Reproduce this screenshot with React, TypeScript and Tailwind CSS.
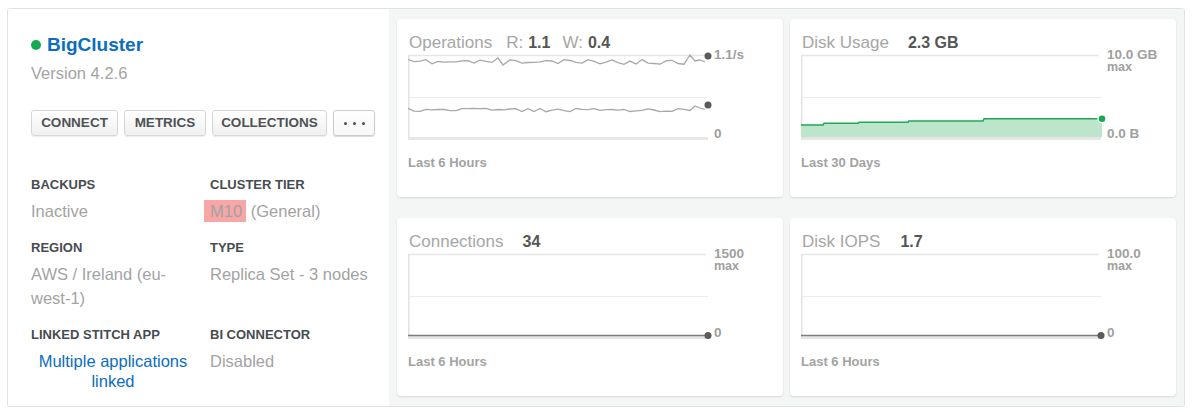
import React from 'react';

// deterministic wobble for the operations chart
function wobble(seed: number, n: number) {
  let s = seed;
  const out: number[] = [];
  for (let i = 0; i < n; i++) {
    s = (s * 16807) % 2147483647;
    out.push(s / 2147483647 - 0.5);
  }
  return out;
}

const toPath = (pts: [number, number][]) =>
  'M' + pts.map(([x, y]) => `${x.toFixed(1)},${y.toFixed(1)}`).join('L');

const N = 50;
const n1 = wobble(11, N);
const n2 = wobble(29, N);

const readPts: [number, number][] = n1.map((v, i) => [i * 6, 9 + v * 5]);
readPts[15] = [90, 5];
readPts[16] = [95, 12];
readPts[47] = [282, 2];
readPts[48] = [287, 8];
readPts[49] = [292, 7];
readPts.push([297, 9]);

const writePts: [number, number][] = n2.map((v, i) => [i * 6, 57 + v * 3.5]);
writePts[48] = [287, 53];
writePts[49] = [292, 55];
writePts.push([297, 56.5]);

const diskPts: [number, number][] = [
  [0, 72],
  [22, 72],
  [23, 70.3],
  [57, 70.3],
  [58, 69.3],
  [107, 69.3],
  [108, 68],
  [182, 68],
  [183, 65.7],
  [301, 65.7],
];

function Grid() {
  return (
    <>
      <line x1="0" y1="2.5" x2="298" y2="2.5" stroke="#e6e6e6" strokeWidth="1.5" />
      <line x1="0" y1="44.5" x2="300" y2="44.5" stroke="#ececec" strokeWidth="1" />
      <line x1="0.75" y1="2" x2="0.75" y2="85" stroke="#e3e3e3" strokeWidth="1.5" />
      <rect x="0" y="84" width="300" height="3" fill="#e6e6e6" />
    </>
  );
}

function Chart({ kind }: { kind: 'ops' | 'disk' | 'flat' }) {
  return (
    <svg width="304" height="88" viewBox="0 0 304 88" className="shrink-0 overflow-visible">
      <Grid />
      {kind === 'ops' && (
        <>
          <path d={toPath(readPts)} fill="none" stroke="#a8a8a8" strokeWidth="1.3" />
          <path d={toPath(writePts)} fill="none" stroke="#a8a8a8" strokeWidth="1.3" />
          <circle cx="300" cy="3" r="3.5" fill="#5b5b5b" />
          <circle cx="300" cy="52" r="3.5" fill="#5b5b5b" />
        </>
      )}
      {kind === 'disk' && (
        <>
          <path d={toPath(diskPts) + 'L301,84L0,84Z'} fill="#bce5cb" />
          <path d={toPath(diskPts)} fill="none" stroke="#1ea854" strokeWidth="1.5" />
          <circle cx="301" cy="65.7" r="4" fill="#13aa52" stroke="#fff" strokeWidth="1.5" />
        </>
      )}
      {kind === 'flat' && (
        <>
          <line x1="0" y1="83.5" x2="300" y2="83.5" stroke="#7d7d7d" strokeWidth="1.5" />
          <circle cx="300" cy="83.5" r="3.5" fill="#5b5b5b" />
        </>
      )}
    </svg>
  );
}

type CardProps = {
  title: React.ReactNode;
  kind: 'ops' | 'disk' | 'flat';
  top: string;
  showMax?: boolean;
  bottom: string;
  range: string;
};

function ChartCard({ title, kind, top, showMax, bottom, range }: CardProps) {
  return (
    <div className="bg-white rounded-[4px] shadow-[0_1px_2px_rgba(0,0,0,0.12)] h-[178px] pl-[11px] pt-[14px] flex flex-col">
      <div className="pl-[1px] flex items-baseline leading-[20px] text-[17px] text-[#a6a6a6] whitespace-nowrap">
        {title}
      </div>
      <div className="flex">
        <Chart kind={kind} />
        <div className="ml-[2px] h-[88px] flex flex-col justify-between -mt-[5px] text-[13.5px] font-bold leading-[13px] text-[#a0a0a0]">
          <div>
            <div>{top}</div>
            {showMax && <div className="text-[12.5px]">max</div>}
          </div>
          <div className="-mb-[4px]">{bottom}</div>
        </div>
      </div>
      <div className="mt-[14px] text-[13px] font-bold leading-[16px] text-[#a3a3a3]">{range}</div>
    </div>
  );
}

const Val = ({ children, ml }: { children: React.ReactNode; ml: string }) => (
  <span className={`${ml} font-bold text-[16px] text-[#565656]`}>{children}</span>
);

function Info({ label, children }: { label: string; children: React.ReactNode }) {
  return (
    <div>
      <div className="text-[13px] font-bold leading-[16px] text-[#464c4f] uppercase">{label}</div>
      {children}
    </div>
  );
}

function LeftPanel() {
  const btn =
    'h-[26px] border border-[#d6d8d8] rounded-[3px] bg-gradient-to-b from-white to-[#f0f0f0] text-[13.5px] font-bold text-[#4f5253] shadow-[0_1px_1px_rgba(0,0,0,0.08)] flex items-center justify-center';
  return (
    <div className="w-[381px] shrink-0 bg-white pl-[23px] pt-[24px]">
      <div className="flex items-center gap-[6px]">
        <span className="w-[10px] h-[10px] rounded-full bg-[#13aa52]" />
        <span className="text-[19px] font-bold leading-[24px] text-[#0b6dbf]">BigCluster</span>
      </div>
      <div className="mt-[4px] text-[16.5px] leading-[24px] text-[#a3a3a3]">Version 4.2.6</div>

      <div className="mt-[25px] flex gap-[6px]">
        <button className={`${btn} w-[87px]`}>CONNECT</button>
        <button className={`${btn} w-[82px]`}>METRICS</button>
        <button className={`${btn} w-[115px]`}>COLLECTIONS</button>
        <button className="h-[26px] w-[42px] border border-[#c8cccc] rounded-[3px] bg-gradient-to-b from-white to-[#f7f7f7] shadow-[0_1px_1px_rgba(0,0,0,0.15)] flex items-center justify-center gap-[6px]">
          <span className="w-[3px] h-[3px] rounded-full bg-[#4f5253]" />
          <span className="w-[3px] h-[3px] rounded-full bg-[#4f5253]" />
          <span className="w-[3px] h-[3px] rounded-full bg-[#4f5253]" />
        </button>
      </div>

      <div className="mt-[41px] grid grid-cols-[164px_1fr] gap-x-[15px] gap-y-[17px] text-[16.5px] leading-[24px] text-[#a3a3a3]">
        <Info label="Backups">
          <div className="mt-[6px]">Inactive</div>
        </Info>
        <Info label="Cluster Tier">
          <div className="mt-[6px]">
            <span className="bg-[#f8a6a6] -ml-[6px] pl-[6px] pr-[4px] py-[2px]">M10</span> (General)
          </div>
        </Info>
        <Info label="Region">
          <div className="mt-[6px]">AWS / Ireland (eu-west-1)</div>
        </Info>
        <Info label="Type">
          <div className="mt-[6px]">Replica Set - 3 nodes</div>
        </Info>
        <Info label="Linked Stitch App">
          <div className="mt-[8px] leading-[20px] text-center text-[#0b6dbf]">Multiple applications linked</div>
        </Info>
        <Info label="BI Connector">
          <div className="mt-[6px]">Disabled</div>
        </Info>
      </div>
    </div>
  );
}

export default function App() {
  return (
    <div className="bg-white min-h-screen pl-[7px] pt-[8px] font-['Liberation_Sans',Arial,sans-serif]">
      <div className="flex w-[1178px] h-[399px] border border-[#dfe2e2] rounded-[3px] overflow-hidden">
        <LeftPanel />
        <div className="flex-1 bg-[#f4f5f5] grid grid-cols-2 grid-rows-2 gap-x-[7px] gap-y-[21px] pt-[10px] px-[8px] pb-[10px]">
          <ChartCard
            kind="ops"
            title={
              <>
                <span>Operations</span>
                <span className="ml-[14px]">R:</span>
                <Val ml="ml-[5px]">1.1</Val>
                <span className="ml-[12px]">W:</span>
                <Val ml="ml-[5px]">0.4</Val>
              </>
            }
            top="1.1/s"
            bottom="0"
            range="Last 6 Hours"
          />
          <ChartCard
            kind="disk"
            title={
              <>
                <span>Disk Usage</span>
                <Val ml="ml-[19px]">2.3 GB</Val>
              </>
            }
            top="10.0 GB"
            showMax
            bottom="0.0 B"
            range="Last 30 Days"
          />
          <ChartCard
            kind="flat"
            title={
              <>
                <span>Connections</span>
                <Val ml="ml-[19px]">34</Val>
              </>
            }
            top="1500"
            showMax
            bottom="0"
            range="Last 6 Hours"
          />
          <ChartCard
            kind="flat"
            title={
              <>
                <span>Disk IOPS</span>
                <Val ml="ml-[20px]">1.7</Val>
              </>
            }
            top="100.0"
            showMax
            bottom="0"
            range="Last 6 Hours"
          />
        </div>
      </div>
    </div>
  );
}
